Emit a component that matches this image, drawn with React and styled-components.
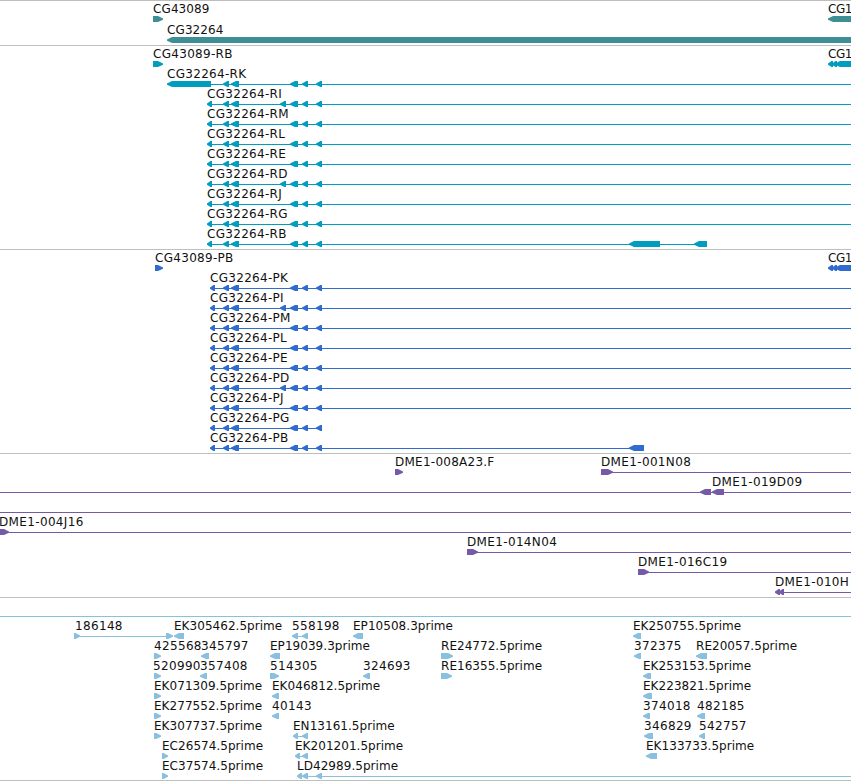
import React from "react";
import styled, { createGlobalStyle } from "styled-components";

const VIEW = 851;
const HEAD = 5;

// arrows shared by all the spliced transcripts, [start, end]
const exons = [[223, 229], [231, 239], [290, 298], [302, 308], [316, 322]];
const extraExon = [280, 286];

// letter spacing per kind of name
const NUM = 0.34;
const EST = 0.04;
const DME = 0.35;
const CG = 0.3;
const GENE = 0.1;
const CUT = -0.5;

const left = (start, end) => ({ start, end, dir: "left" });
const right = (start, end) => ({ start, end, dir: "right" });
const text = (x, name, spacing) => ({ x, name, spacing });

const spliced = (name, x, { extra, first = [x, x + 5], lineEnd = VIEW, more = [] } = {}) => ({
  labels: [text(x, name, CG)],
  lines: [[first[0] + 2, lineEnd]],
  glyphs: [first, ...exons, ...(extra ? [extraExon] : []), ...more].map(([a, b]) => left(a, b))
});

const tracks = [
  {
    color: "#3d8f95",
    height: 45,
    lanes: [
      { height: 21, labels: [text(153, "CG43089", GENE), text(828, "CG1", CUT)], glyphs: [right(153, 163), left(828, 860)] },
      { labels: [text(167, "CG32264", GENE)], glyphs: [left(167, 860)] }
    ]
  },
  {
    color: "#009dbf",
    height: 204,
    lanes: [
      {
        labels: [text(153, "CG43089-RB", CG), text(828, "CG1", CUT)],
        glyphs: [right(153, 159), right(155, 163), left(828, 833), left(832, 837), left(835, 860)]
      },
      spliced("CG32264-RK", 167, { first: [167, 211] }),
      spliced("CG32264-RI", 207, { extra: true }),
      spliced("CG32264-RM", 207),
      spliced("CG32264-RL", 207),
      spliced("CG32264-RE", 207),
      spliced("CG32264-RD", 207, { extra: true }),
      spliced("CG32264-RJ", 207),
      spliced("CG32264-RG", 207),
      spliced("CG32264-RB", 207, { lineEnd: 700, more: [[629, 660], [694, 707]] })
    ]
  },
  {
    color: "#306ccf",
    height: 204,
    lanes: [
      {
        labels: [text(155, "CG43089-PB", CG), text(828, "CG1", CUT)],
        glyphs: [right(155, 163), left(828, 833), left(832, 837), left(835, 860)]
      },
      spliced("CG32264-PK", 210),
      spliced("CG32264-PI", 210, { extra: true }),
      spliced("CG32264-PM", 210),
      spliced("CG32264-PL", 210),
      spliced("CG32264-PE", 210),
      spliced("CG32264-PD", 210, { extra: true }),
      spliced("CG32264-PJ", 210),
      spliced("CG32264-PG", 210, { lineEnd: 320 }),
      spliced("CG32264-PB", 210, { lineEnd: 640, more: [[629, 644]] })
    ]
  },
  {
    color: "#755aa8",
    height: 144,
    lanes: [
      {
        labels: [text(395, "DME1-008A23.F", 0.25), text(601, "DME1-001N08", DME)],
        lines: [[610, VIEW]],
        glyphs: [right(395, 403), right(601, 613)]
      },
      { labels: [text(712, "DME1-019D09", DME)], lines: [[0, VIEW]], glyphs: [left(700, 711), left(712, 724)] },
      { lines: [[0, VIEW]] },
      { labels: [text(-1, "DME1-004J16", DME)], lines: [[0, VIEW]], glyphs: [right(-3, 9)] },
      { labels: [text(467, "DME1-014N04", DME)], lines: [[475, VIEW]], glyphs: [right(467, 478)] },
      { labels: [text(638, "DME1-016C19", DME)], lines: [[646, VIEW]], glyphs: [right(638, 649)] },
      { labels: [text(775, "DME1-010H", DME)], lines: [[777, VIEW]], glyphs: [left(775, 780), left(779, 784)] }
    ]
  },
  {
    color: "#89bfdf",
    height: 183,
    lanes: [
      { lines: [[0, VIEW]] },
      {
        labels: [
          text(75, "186148", NUM),
          text(174, "EK305462.5prime", EST),
          text(292, "558198", NUM),
          text(353, "EP10508.3prime", EST),
          text(633, "EK250755.5prime", EST)
        ],
        lines: [[76, 170], [294, 306]],
        glyphs: [right(74, 80), right(166, 173), left(174, 184), left(292, 298), left(302, 308), left(353, 363), left(633, 641)]
      },
      {
        labels: [
          text(154, "425568", NUM),
          text(201, "345797", NUM),
          text(270, "EP19039.3prime", EST),
          text(441, "RE24772.5prime", EST),
          text(634, "372375", NUM),
          text(696, "RE20057.5prime", EST)
        ],
        glyphs: [right(154, 161), left(201, 209), left(270, 280), right(441, 453), left(634, 641), left(696, 707)]
      },
      {
        labels: [
          text(153, "520990", NUM),
          text(200, "357408", NUM),
          text(270, "514305", NUM),
          text(363, "324693", NUM),
          text(441, "RE16355.5prime", EST),
          text(643, "EK253153.5prime", EST)
        ],
        glyphs: [right(154, 161), left(200, 207), right(270, 279), left(363, 370), right(441, 452), left(643, 651)]
      },
      {
        labels: [text(154, "EK071309.5prime", EST), text(272, "EK046812.5prime", EST), text(643, "EK223821.5prime", EST)],
        glyphs: [right(154, 161), left(272, 279), left(643, 652)]
      },
      {
        labels: [text(154, "EK277552.5prime", EST), text(272, "40143", NUM), text(643, "374018", NUM), text(697, "482185", NUM)],
        glyphs: [right(154, 161), left(272, 279), left(643, 650), left(697, 705)]
      },
      {
        labels: [
          text(154, "EK307737.5prime", EST),
          text(293, "EN13161.5prime", EST),
          text(644, "346829", NUM),
          text(699, "542757", NUM)
        ],
        lines: [[295, 306]],
        glyphs: [right(154, 161), left(293, 298), left(302, 308), left(644, 653), left(699, 705)]
      },
      {
        labels: [text(162, "EC26574.5prime", EST), text(295, "EK201201.5prime", EST), text(646, "EK133733.5prime", EST)],
        lines: [[297, 306]],
        glyphs: [right(162, 168), left(295, 300), left(302, 308), left(646, 657)]
      },
      {
        labels: [text(162, "EC37574.5prime", EST), text(297, "LD42989.5prime", EST)],
        lines: [[299, VIEW]],
        glyphs: [right(162, 168), left(297, 302), left(302, 308), left(316, 322)]
      }
    ]
  }
];

const outline = ({ start, end, dir }) => {
  const head = Math.min(HEAD, end - start - 1.5);
  return dir === "left"
    ? `M${start} 2.5L${start + head} 0H${end}V6H${start + head}L${start} 3.7Z`
    : `M${end} 2.5L${end - head} 0H${start}V6H${end - head}L${end} 3.7Z`;
};

const Lane = ({ labels = [], lines = [], glyphs = [], height = 20 }) => (
  <LaneRow $height={height}>
    <Labels>
      {labels.map(({ x, name, spacing }) => (
        <Label key={name} $x={x} $spacing={spacing}>
          {name}
        </Label>
      ))}
    </Labels>
    <Glyphs viewBox={`0 0 ${VIEW} 6`}>
      {lines.map(([from, to]) => (
        <rect key={from} x={from} y="3" width={to - from} height="1" />
      ))}
      {glyphs.map(glyph => (
        <path key={glyph.start} d={outline(glyph)} />
      ))}
    </Glyphs>
  </LaneRow>
);

const App = () => {
  return (
    <Browser>
      <GlobalStyle />
      {tracks.map(({ color, height, lanes }) => (
        <Track key={color} $color={color} $height={height}>
          {lanes.map((lane, i) => (
            <Lane key={i} {...lane} />
          ))}
        </Track>
      ))}
      <Rule />
    </Browser>
  );
};

export default App;

const GlobalStyle = createGlobalStyle`
  body {
    margin: 0;
    background: #fff;
    overflow: hidden;
  }
`;

const Browser = styled.main`
  width: 851px;
  height: 781px;
  overflow: hidden;
  font-family: "DejaVu Sans", sans-serif;
  font-size: 12px;
`;

const Track = styled.section`
  box-sizing: border-box;
  height: ${props => props.$height}px;
  border-top: 1px solid #bebebe;
  color: ${props => props.$color};
`;

const Rule = styled.div`
  height: 1px;
  background: #bebebe;
`;

const LaneRow = styled.div`
  display: flex;
  flex-direction: column;
  height: ${props => props.$height}px;
`;

const Labels = styled.div`
  position: relative;
  flex: none;
  height: 15px;
`;

// names sit at the sequence position of their feature
const Label = styled.span`
  position: absolute;
  left: ${props => props.$x}px;
  top: 1px;
  line-height: 15px;
  letter-spacing: ${props => props.$spacing}px;
  white-space: nowrap;
  color: #111;
`;

const Glyphs = styled.svg`
  flex: none;
  display: block;
  width: 851px;
  height: 6px;
  fill: currentColor;
`;
